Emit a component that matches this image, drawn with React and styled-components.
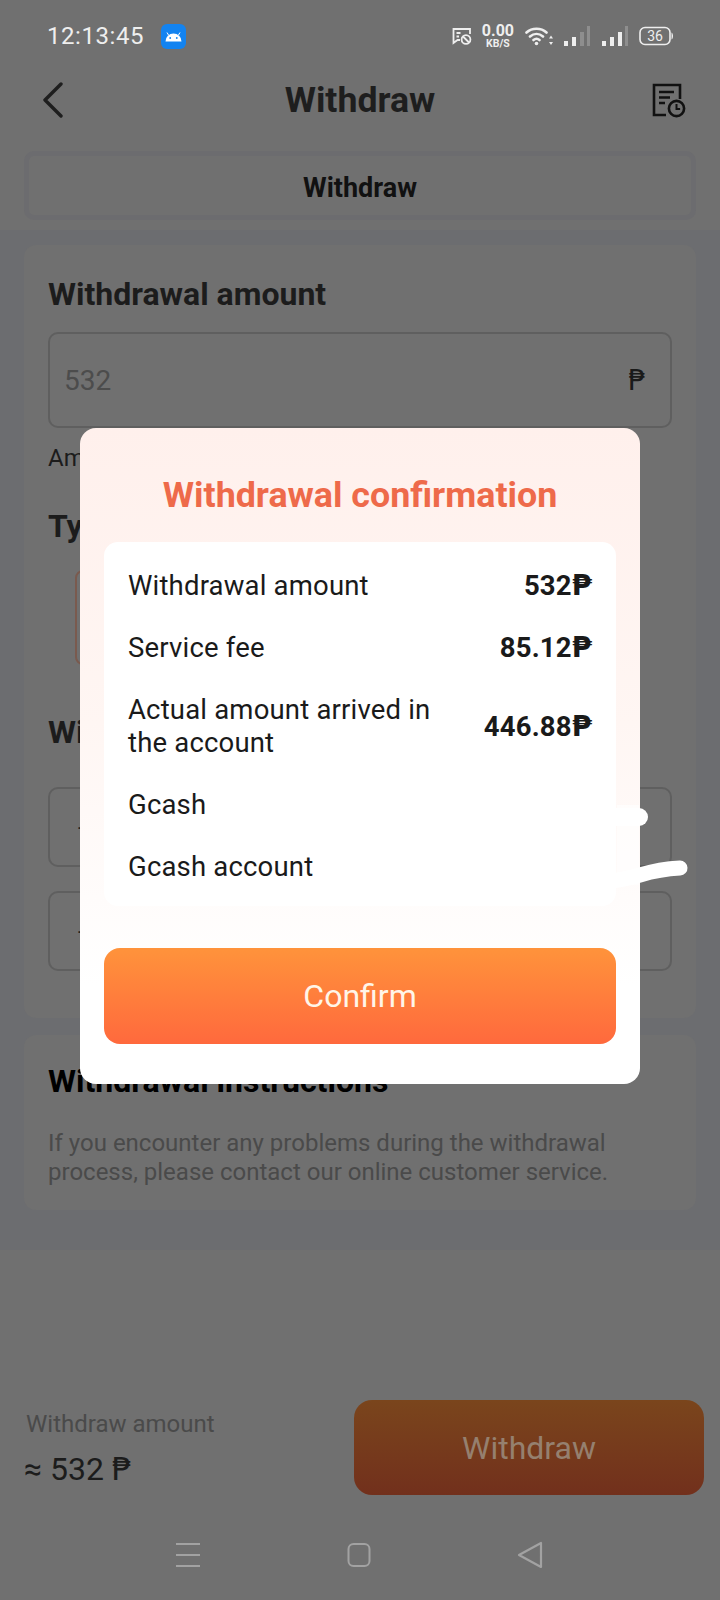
import React from "react";
import styled, { createGlobalStyle } from "styled-components";

const Global = createGlobalStyle`
  html, body { margin: 0; padding: 0; background: #707070; }
  * { box-sizing: border-box; }
`;
const FONT = `Roboto, "DejaVu Sans", sans-serif`;

const Screen = styled.div`
  position: relative; width: 720px; height: 1600px; overflow: hidden;
  display: flex; flex-direction: column; background: #707070; font-family: ${FONT};
`;
const StatusBar = styled.div`
  height: 72px; display: flex; align-items: center; padding: 0 46px 0 47px; color: #eeeeee;
`;
const Time = styled.span`font-size: 24px; letter-spacing: 0.55px;`;
const AppBadge = styled.span`
  width: 25px; height: 25px; border-radius: 6px; background: #1383f0; margin-left: 17px;
  display: flex; align-items: center; justify-content: center;
`;
const StatusRight = styled.div`margin-left: auto; display: flex; align-items: center;`;
const Speed = styled.div`
  display: flex; flex-direction: column; align-items: center; margin: 0 11px 0 10px;
  font-weight: 700; line-height: 1;
  span:first-child { font-size: 16px; }
  span:last-child { font-size: 10.5px; margin-top: 0; }
`;
const Header = styled.div`
  height: 56px; display: flex; align-items: center; justify-content: space-between; padding: 0 34px 0 42px;
`;
const HeaderTitle = styled.h1`
  margin: 0; font-size: 35.7px; font-weight: 700; color: #1e1e1e; position: relative; left: 2px;
`;
const TabBox = styled.div`
  height: 69px; margin: 23px 24px 10px; border-radius: 10px; border: 5px solid #6c6c6f; padding-top: 5px;
  display: flex; align-items: center; justify-content: center;
  font-size: 27px; font-weight: 700; color: #111;
`;
const Body = styled.div`
  background: #6c6d70; height: 1020px; padding: 15px 24px 0; display: flex; flex-direction: column; gap: 17px;
`;
const Card = styled.div`
  background: #707070; border-radius: 12px; padding: ${p => p.$pad}; height: ${p => p.$h}px;
`;
const SectionTitle = styled.h2`
  margin: ${p => p.$mt || 0}px 0 0; font-size: 32px; line-height: 36px; font-weight: 700; color: ${p => p.$c || "#1c1c1c"};
`;
const AmountInput = styled.div`
  margin-top: 20px; height: 96px; border: 2px solid #5f5f5f; border-radius: 10px; padding: 0 22px 0 14px;
  display: flex; align-items: center; justify-content: space-between;
  font-size: 28px; color: #4c4c4c;
`;
const PesoMark = styled.span`font-size: 28px; color: #1a1a1a; font-family: "DejaVu Sans", sans-serif; font-weight: 400; margin-right: 2px;`;
const Hint = styled.div`margin-top: 16px; font-size: 24px; line-height: 28px; color: #1c1c1c;`;
const TypeBox = styled.div`
  margin: 26px 0 0 27px; width: 200px; height: 95px; border-radius: 8px; border: 2px solid #7a5a4e;
`;
const FieldBox = styled.div`
  height: ${p => p.$h}px; margin-top: ${p => p.$mt}px; border: 2px solid #5f5f5f; border-radius: 10px;
  display: flex; align-items: center; padding-left: 28px; font-size: 24px; color: #222;
`;
const Instructions = styled.p`
  margin: 30px 0 0; font-size: 24px; line-height: 28.5px; color: #4a4a4a;
`;
const Footer = styled.div`
  flex: 1; display: flex; justify-content: space-between; padding: 0 16px 0 24px; align-items: flex-start;
`;
const Totals = styled.div`display: flex; flex-direction: column; margin-top: 160px;`;
const TotalLabel = styled.span`font-size: 24px; line-height: 28px; color: #4a4a4a; margin-left: 2px;`;
const TotalValue = styled.span`
  font-size: 32px; line-height: 38px; margin-top: 12px; color: #1c1c1c;
  small { font-size: 32px; line-height: 32px; font-family: "DejaVu Sans", sans-serif; }
`;
const DimButton = styled.div`
  margin-top: 150px; width: 350px; height: 95px; border-radius: 18px;
  background: linear-gradient(#7a451c, #72301c);
  display: flex; align-items: center; justify-content: center; font-size: 32px; color: #95806f;
`;
const NavBar = styled.div`
  position: absolute; left: 175px; bottom: 32px; width: 368px; height: 26px;
  display: flex; justify-content: space-between; align-items: center;
`;
const Modal = styled.div`
  position: absolute; left: 80px; top: 428px; width: 560px; height: 656px; border-radius: 16px;
  background: linear-gradient(#fff0ec, #fff6f3 45%, #ffffff 85%); padding: 0 24px 40px;
  display: flex; flex-direction: column;
`;
const ModalTitle = styled.h3`
  margin: 0; height: 114px; display: flex; align-items: center; justify-content: center; padding-top: 19px;
  font-size: 35.8px; font-weight: 700; color: #ee6a4a;
`;
const Details = styled.div`
  background: #fff; border-radius: 14px; padding: 27px 24px 23px; display: flex; flex-direction: column; gap: 29px;
`;
const Row = styled.div`
  display: flex; justify-content: space-between; align-items: center; font-size: 27.5px; line-height: 33px; color: #1a1a1a;
`;
const RowLabel = styled.span`max-width: 310px; letter-spacing: 0.18px;`;
const RowValue = styled.span`font-weight: 700; letter-spacing: 0.2px; margin-right: 1px;`;
const Peso = styled.span`font-family: "DejaVu Sans", sans-serif; font-size: 29px; line-height: 29px; font-weight: 700; letter-spacing: -1px;`;
const Confirm = styled.div`
  margin-top: 42px; height: 96px; border-radius: 16px; background: linear-gradient(#ff933b, #ff693d);
  display: flex; align-items: center; justify-content: center; color: #fff5e8; font-size: 32px;
`;
const Scribble = styled.svg`position: absolute; left: 0; top: 0; pointer-events: none;`;

const Android = () => (
  <svg width="17" height="11" viewBox="0 0 17 11" fill="#fff">
    <path d="M0.5 10.5a8 8 0 0 1 16 0z" />
    <path d="M3.5 4L2 1.5M13.5 4L15 1.5" stroke="#fff" strokeWidth="1" />
    <circle cx="5.2" cy="7" r="0.9" fill="#1383f0" /><circle cx="11.8" cy="7" r="0.9" fill="#1383f0" />
  </svg>
);
const MsgOff = () => (
  <svg width="20" height="20" viewBox="0 0 20 20" fill="none" stroke="#eee" strokeWidth="1.8">
    <path d="M10 3H1.5v14l4-3H8M10 3h8v5" />
    <path d="M4.5 7h4M4.5 10.5h2.5" />
    <circle cx="14" cy="13.5" r="4.4" /><path d="M11 10.5l6 6" />
  </svg>
);
const Wifi = () => (
  <svg width="28" height="20" viewBox="0 0 28 20" fill="none" stroke="#eee" strokeWidth="2.6" strokeLinecap="round">
    <path d="M1.5 6.5C7 1.4 16 1.4 21.5 6.5M5 10.5c4-3.4 9-3.4 13 0M8.5 14c1.8-1.5 4.2-1.5 6 0" />
    <circle cx="11.5" cy="17.5" r="1.8" fill="#eee" stroke="none" />
    <path d="M26 9.5l-2 3h4zM26 19l-2-3h4z" fill="#eee" stroke="none" />
  </svg>
);
const Signal = ({ on, ml }) => (
  <svg width="27" height="20" viewBox="0 0 27 20" style={{ marginLeft: ml }}>
    {[[1, 15, 5], [9, 11, 9], [17, 6, 14], [24, 0, 20]].map(([x, y, h], i) => (
      <rect key={i} x={x} y={y} width={i === 3 ? 3 : 4} height={h} fill={i < on ? "#eee" : "#8e8e8e"} />
    ))}
  </svg>
);
const Battery = () => (
  <svg width="35" height="20" viewBox="0 0 35 20" style={{ marginLeft: 11 }}>
    <rect x="1" y="1.5" width="30" height="17" rx="5" fill="none" stroke="#eee" strokeWidth="1.6" />
    <path d="M32.5 6.5c2 1 2 6 0 7z" fill="#eee" />
    <text x="16" y="15" textAnchor="middle" fontSize="14" fontFamily="Roboto" fill="#eee">36</text>
  </svg>
);
const Back = () => (
  <svg width="22" height="36" viewBox="0 0 22 36" fill="none" stroke="#1e1e1e" strokeWidth="3.4" strokeLinecap="round" strokeLinejoin="round">
    <path d="M19 2L3 18l16 16" />
  </svg>
);
const History = () => (
  <svg width="34" height="35" viewBox="0 0 34 35" fill="none" stroke="#111" strokeWidth="2.6">
    <path d="M14 32H2V2h26v14" />
    <path d="M7 9h15M7 14.5h11M7 20h6" />
    <circle cx="24.5" cy="25.5" r="7.6" />
    <path d="M24.5 21v5h3.6" strokeWidth="2" />
  </svg>
);

export default function App() {
  return (
    <Screen>
      <Global />
      <StatusBar>
        <Time>12:13:45</Time>
        <AppBadge><Android /></AppBadge>
        <StatusRight>
          <MsgOff />
          <Speed><span>0.00</span><span>KB/S</span></Speed>
          <Wifi />
          <Signal on={2} ml={10} />
          <Signal on={3} ml={11} />
          <Battery />
        </StatusRight>
      </StatusBar>
      <Header>
        <Back />
        <HeaderTitle>Withdraw</HeaderTitle>
        <History />
      </Header>
      <TabBox>Withdraw</TabBox>
      <Body>
        <Card $pad="31px 24px 0" $h={773}>
          <SectionTitle>Withdrawal amount</SectionTitle>
          <AmountInput>532<PesoMark>₱</PesoMark></AmountInput>
          <Hint>Amount</Hint>
          <SectionTitle $mt={36}>Type</SectionTitle>
          <TypeBox />
          <SectionTitle $mt={49}>Withdrawal account</SectionTitle>
          <FieldBox $h={80} $mt={37}>-</FieldBox>
          <FieldBox $h={80} $mt={24}>-</FieldBox>
        </Card>
        <Card $pad="28px 24px 0" $h={175}>
          <SectionTitle $c="#000">Withdrawal instructions</SectionTitle>
          <Instructions>
            If you encounter any problems during the withdrawal process, please contact our online customer service.
          </Instructions>
        </Card>
      </Body>
      <Footer>
        <Totals>
          <TotalLabel>Withdraw amount</TotalLabel>
          <TotalValue>≈ 532 <small>₱</small></TotalValue>
        </Totals>
        <DimButton>Withdraw</DimButton>
      </Footer>
      <NavBar>
        <svg width="26" height="26" viewBox="0 0 26 26" stroke="#a2a2a2" strokeWidth="2"><path d="M1 2h24M1 13h24M1 24h24" /></svg>
        <svg width="24" height="26" viewBox="0 0 24 26" fill="none" stroke="#a2a2a2" strokeWidth="2"><rect x="1.5" y="2" width="21" height="22" rx="5" /></svg>
        <svg width="26" height="28" viewBox="0 0 26 28" fill="none" stroke="#a2a2a2" strokeWidth="2.2" strokeLinejoin="round"><path d="M24 2v24L2 14z" /></svg>
      </NavBar>
      <Modal>
        <ModalTitle>Withdrawal confirmation</ModalTitle>
        <Details>
          <Row><RowLabel>Withdrawal amount</RowLabel><RowValue>532<Peso>₱</Peso></RowValue></Row>
          <Row><RowLabel>Service fee</RowLabel><RowValue>85.12<Peso>₱</Peso></RowValue></Row>
          <Row><RowLabel>Actual amount arrived in the account</RowLabel><RowValue>446.88<Peso>₱</Peso></RowValue></Row>
          <Row><RowLabel>Gcash</RowLabel></Row>
          <Row><RowLabel>Gcash account</RowLabel></Row>
        </Details>
        <Confirm>Confirm</Confirm>
      </Modal>
      <Scribble width="720" height="1600" viewBox="0 0 720 1600" fill="none" stroke="#fff" strokeLinecap="round">
        <path d="M628 805V885" strokeWidth="22" opacity="0.6" strokeLinecap="butt" />
        <path d="M600 817H639" strokeWidth="18" />
        <path d="M600 882C640 880 640 870 680 868" strokeWidth="15" />
      </Scribble>
    </Screen>
  );
}
